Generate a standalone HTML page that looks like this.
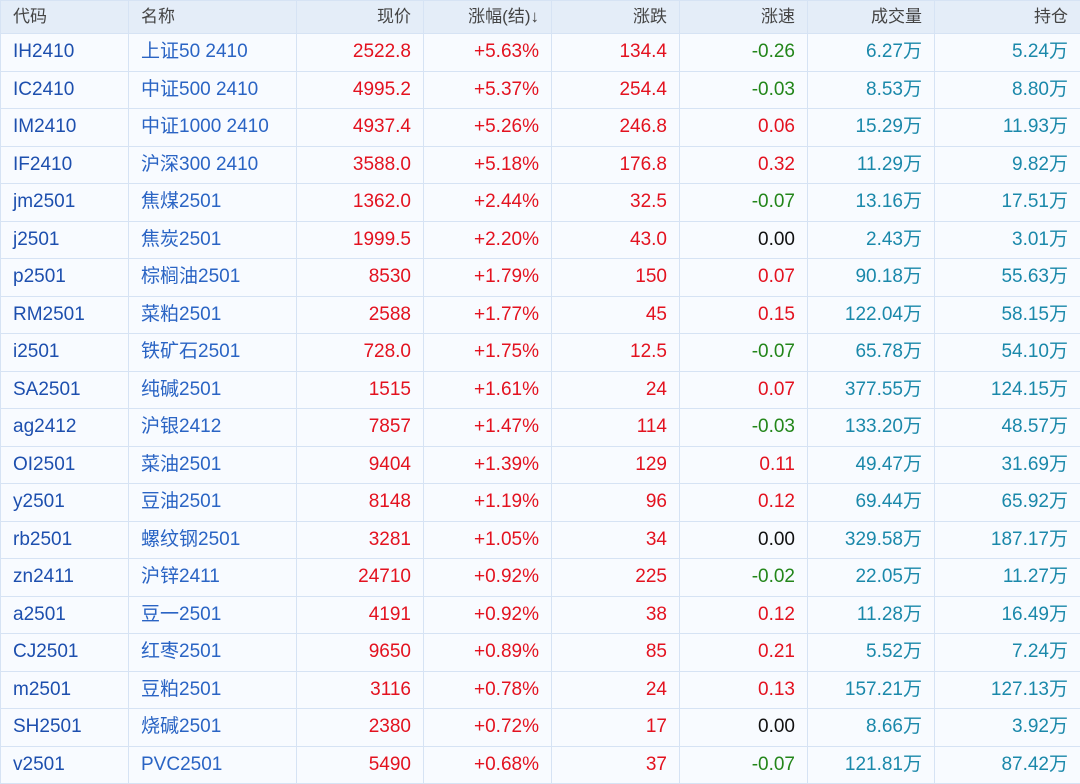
<!DOCTYPE html><html><head><meta charset="utf-8"><style>
body{margin:0;width:1080px;height:784px;overflow:hidden;background:#f7faff;font-family:"Liberation Sans","Noto Sans CJK SC",sans-serif}
table{border-collapse:collapse;width:1080px;table-layout:fixed}
td,th{border:1px solid #d6e3f4;padding:0 12px;font-size:19px;line-height:20px;font-weight:normal;white-space:nowrap;overflow:hidden;text-align:right;vertical-align:middle}
td span,th span{display:inline-block;line-height:20px;height:20px;vertical-align:top;padding-top:2px}
th{height:32px;background:#e4edf8;color:#444;font-size:17px}
td{height:36.5px;background:#f8fbff}
tr>*:nth-child(1),tr>*:nth-child(2){text-align:left}
td:nth-child(1){color:#1d4fae}
td:nth-child(2){color:#2a64c4}
td:nth-child(3),td:nth-child(4),td:nth-child(5){color:#e3121f}
.g{color:#23861a}.r{color:#e3121f}.k{color:#111}
td:nth-child(7),td:nth-child(8){color:#1a88aa}
</style></head><body><table>
<colgroup><col style="width:128px"><col style="width:168px"><col style="width:127px"><col style="width:128px"><col style="width:128px"><col style="width:128px"><col style="width:127px"><col style="width:146px"></colgroup>
<tr><th>代码</th><th>名称</th><th>现价</th><th>涨幅(结)↓</th><th>涨跌</th><th>涨速</th><th>成交量</th><th>持仓</th></tr>
<tr><td>IH2410</td><td>上证50 2410</td><td>2522.8</td><td>+5.63%</td><td>134.4</td><td class="g">-0.26</td><td>6.27万</td><td>5.24万</td></tr>
<tr><td>IC2410</td><td>中证500 2410</td><td>4995.2</td><td>+5.37%</td><td>254.4</td><td class="g">-0.03</td><td>8.53万</td><td>8.80万</td></tr>
<tr><td>IM2410</td><td>中证1000 2410</td><td>4937.4</td><td>+5.26%</td><td>246.8</td><td class="r">0.06</td><td>15.29万</td><td>11.93万</td></tr>
<tr><td>IF2410</td><td>沪深300 2410</td><td>3588.0</td><td>+5.18%</td><td>176.8</td><td class="r">0.32</td><td>11.29万</td><td>9.82万</td></tr>
<tr><td>jm2501</td><td>焦煤2501</td><td>1362.0</td><td>+2.44%</td><td>32.5</td><td class="g">-0.07</td><td>13.16万</td><td>17.51万</td></tr>
<tr><td>j2501</td><td>焦炭2501</td><td>1999.5</td><td>+2.20%</td><td>43.0</td><td class="k">0.00</td><td>2.43万</td><td>3.01万</td></tr>
<tr><td>p2501</td><td>棕榈油2501</td><td>8530</td><td>+1.79%</td><td>150</td><td class="r">0.07</td><td>90.18万</td><td>55.63万</td></tr>
<tr><td>RM2501</td><td>菜粕2501</td><td>2588</td><td>+1.77%</td><td>45</td><td class="r">0.15</td><td>122.04万</td><td>58.15万</td></tr>
<tr><td>i2501</td><td>铁矿石2501</td><td>728.0</td><td>+1.75%</td><td>12.5</td><td class="g">-0.07</td><td>65.78万</td><td>54.10万</td></tr>
<tr><td>SA2501</td><td>纯碱2501</td><td>1515</td><td>+1.61%</td><td>24</td><td class="r">0.07</td><td>377.55万</td><td>124.15万</td></tr>
<tr><td>ag2412</td><td>沪银2412</td><td>7857</td><td>+1.47%</td><td>114</td><td class="g">-0.03</td><td>133.20万</td><td>48.57万</td></tr>
<tr><td>OI2501</td><td>菜油2501</td><td>9404</td><td>+1.39%</td><td>129</td><td class="r">0.11</td><td>49.47万</td><td>31.69万</td></tr>
<tr><td>y2501</td><td>豆油2501</td><td>8148</td><td>+1.19%</td><td>96</td><td class="r">0.12</td><td>69.44万</td><td>65.92万</td></tr>
<tr><td>rb2501</td><td>螺纹钢2501</td><td>3281</td><td>+1.05%</td><td>34</td><td class="k">0.00</td><td>329.58万</td><td>187.17万</td></tr>
<tr><td>zn2411</td><td>沪锌2411</td><td>24710</td><td>+0.92%</td><td>225</td><td class="g">-0.02</td><td>22.05万</td><td>11.27万</td></tr>
<tr><td>a2501</td><td>豆一2501</td><td>4191</td><td>+0.92%</td><td>38</td><td class="r">0.12</td><td>11.28万</td><td>16.49万</td></tr>
<tr><td>CJ2501</td><td>红枣2501</td><td>9650</td><td>+0.89%</td><td>85</td><td class="r">0.21</td><td>5.52万</td><td>7.24万</td></tr>
<tr><td>m2501</td><td>豆粕2501</td><td>3116</td><td>+0.78%</td><td>24</td><td class="r">0.13</td><td>157.21万</td><td>127.13万</td></tr>
<tr><td>SH2501</td><td>烧碱2501</td><td>2380</td><td>+0.72%</td><td>17</td><td class="k">0.00</td><td>8.66万</td><td>3.92万</td></tr>
<tr><td>v2501</td><td>PVC2501</td><td>5490</td><td>+0.68%</td><td>37</td><td class="g">-0.07</td><td>121.81万</td><td>87.42万</td></tr>
</table></body></html>
